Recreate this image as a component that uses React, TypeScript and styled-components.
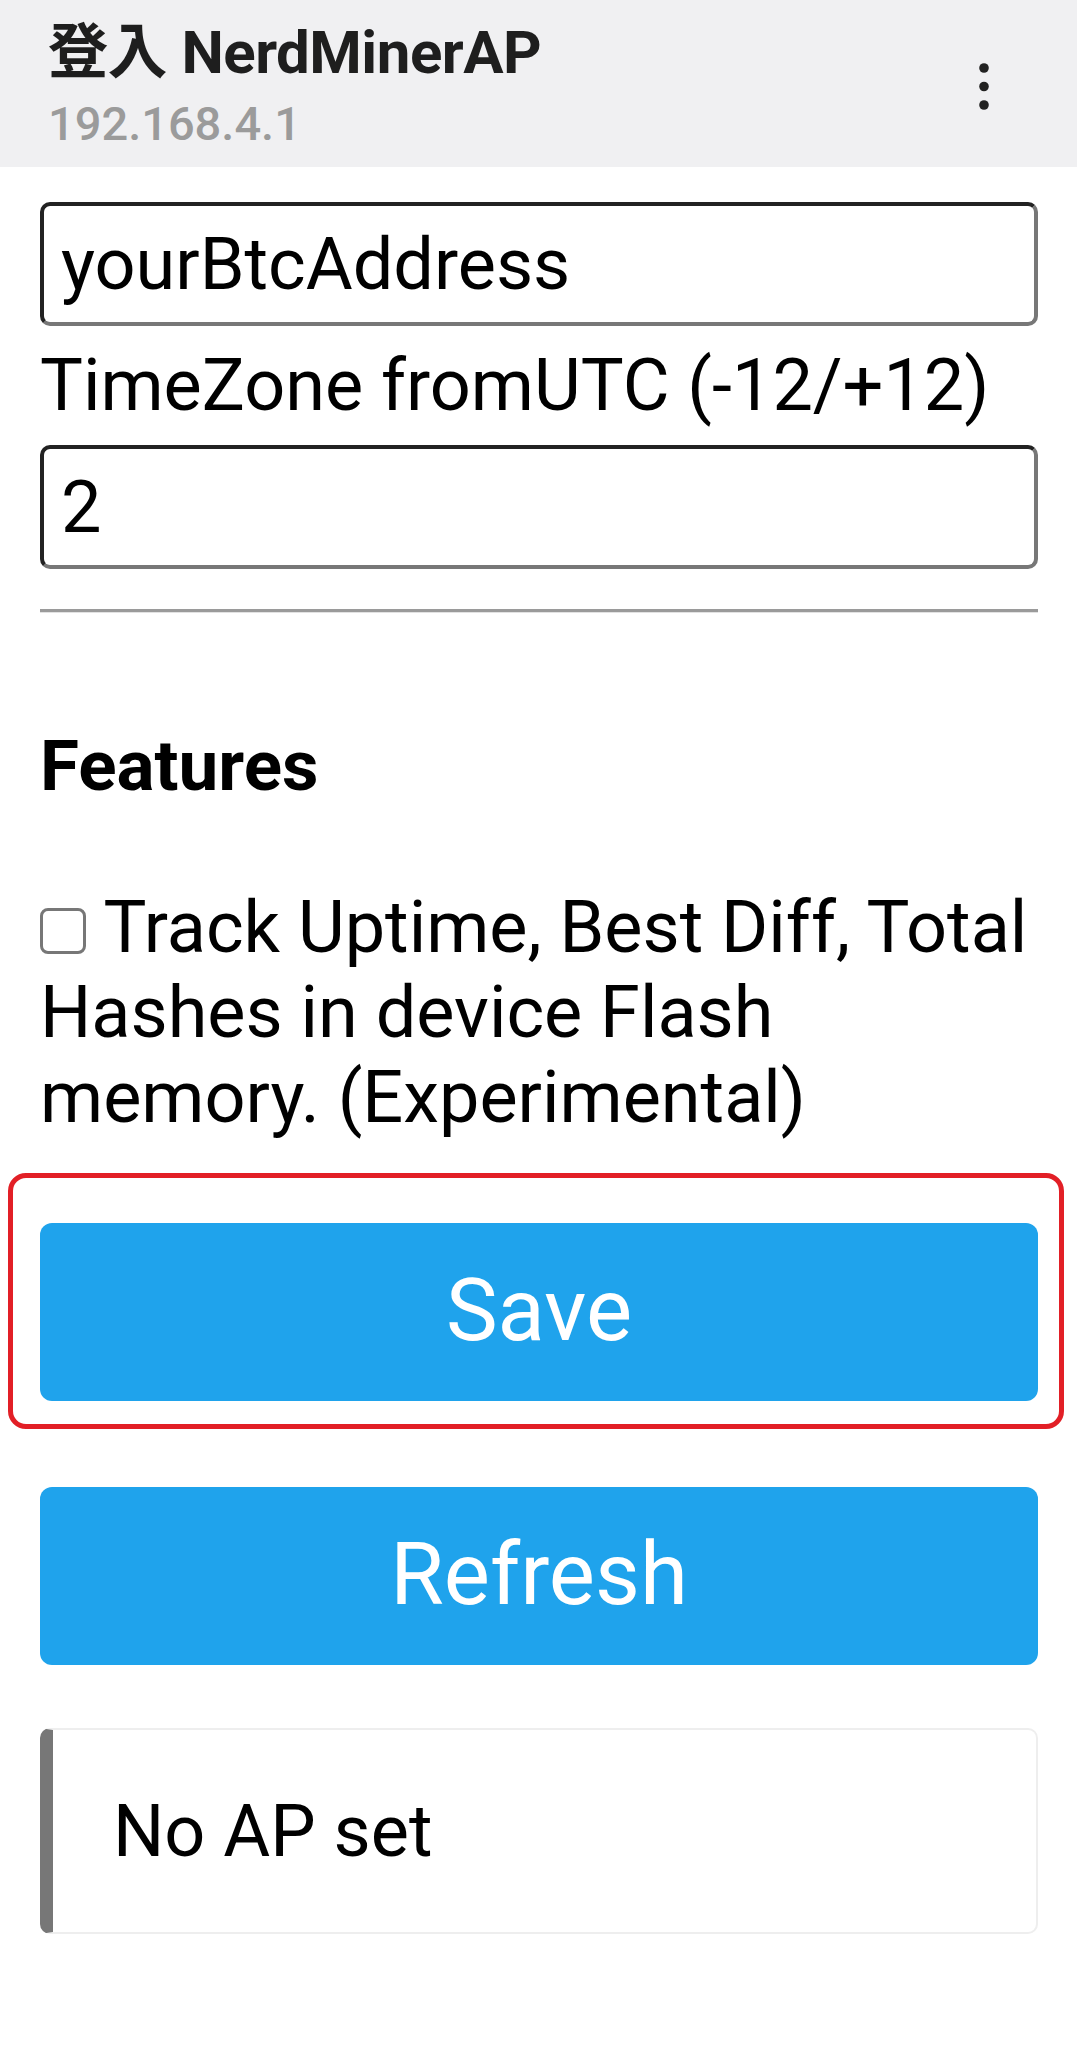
import React from "react";
import styled, { createGlobalStyle } from "styled-components";

const GlobalStyle = createGlobalStyle`
  html, body {
    margin: 0;
    padding: 0;
    background: #ffffff;
    font-family: Roboto, "Noto Sans CJK TC", "Noto Sans", sans-serif;
    color: #000;
  }
  * { box-sizing: border-box; }
`;

const Page = styled.div`
  width: 1077px;
  min-height: 2048px;
  background: #fff;
`;

const TopBar = styled.header`
  height: 167px;
  background: #f0f0f2;
  display: flex;
  align-items: center;
  justify-content: space-between;
  padding: 0 83px 0 48px;
`;

const TitleBlock = styled.div`
  display: flex;
  flex-direction: column;
  padding-top: 5px;
`;

const Title = styled.div`
  font-family: Roboto, "Noto Sans CJK TC", sans-serif;
  font-weight: 700;
  font-size: 60px;
  line-height: 70px;
  color: #1e1e1e;
  letter-spacing: -0.5px;
`;

const Subtitle = styled.div`
  font-family: Roboto, sans-serif;
  font-weight: 500;
  font-size: 47px;
  line-height: 60px;
  color: #9b9b9b;
  margin-top: 6px;
`;

const Kebab = styled.svg`
  width: 20px;
  height: 56px;
  display: block;
  margin-top: 6px;
`;

const Content = styled.main`
  padding: 0 39px 0 40px;
  display: flex;
  flex-direction: column;
`;

const TextInput = styled.input<{ $top: number }>`
  display: block;
  width: 100%;
  height: 124px;
  margin: ${(p) => p.$top}px 0 0 0;
  padding: 0 17px;
  border-style: solid;
  border-width: 4px;
  border-color: #222 #777 #777 #222;
  border-radius: 10px;
  font-family: Roboto, sans-serif;
  font-size: 72px;
  color: #000;
  background: #fff;
  outline: none;
`;

const FieldLabel = styled.label`
  display: block;
  font-size: 72px;
  line-height: 85px;
  margin: 17px 0;
`;

const Rule = styled.hr`
  margin: 40px 0 0 0;
  border: 0;
  border-top: 3px solid #9a9a9a;
  border-bottom: 1px solid #e2e2e2;
  height: 0;
`;

const SectionTitle = styled.h3`
  margin: 110px 0 0 0;
  font-size: 71px;
  line-height: 85px;
  font-weight: 700;
`;

const CheckRow = styled.label`
  display: block;
  margin-top: 77px;
  font-size: 72px;
  line-height: 85px;
`;

const CheckBox = styled.input`
  appearance: none;
  -webkit-appearance: none;
  width: 46px;
  height: 46px;
  margin: 0 1px 0 0;
  border: 3px solid #777;
  border-radius: 8px;
  background: #fff;
  vertical-align: -2px;
`;

const ButtonSlot = styled.div<{ $top: number }>`
  position: relative;
  margin-top: ${(p) => p.$top}px;
`;

const Highlight = styled.div`
  position: absolute;
  top: -50px;
  left: -32px;
  right: -26px;
  bottom: -28px;
  border: 5px solid #e21f26;
  border-radius: 18px;
  pointer-events: none;
`;

const ActionButton = styled.button`
  display: block;
  width: 100%;
  height: 178px;
  border: 0;
  border-radius: 12px;
  background: #1fa3ec;
  color: #fff;
  font-family: Roboto, sans-serif;
  font-size: 87px;
  padding: 0 0 4px 0;
  cursor: pointer;
`;

const Message = styled.div`
  margin-top: 63px;
  height: 206px;
  display: flex;
  align-items: center;
  padding-left: 60px;
  border: 2px solid #eee;
  border-left: 13px solid #777;
  border-radius: 10px;
  font-size: 72px;
`;

export default function App() {
  return (
    <Page>
      <GlobalStyle />
      <TopBar>
        <TitleBlock>
          <Title>登入 NerdMinerAP</Title>
          <Subtitle>192.168.4.1</Subtitle>
        </TitleBlock>
        <Kebab viewBox="0 0 20 56" aria-hidden="true">
          <circle cx="10" cy="9" r="4.8" fill="#222" />
          <circle cx="10" cy="27.5" r="4.8" fill="#222" />
          <circle cx="10" cy="46" r="4.8" fill="#222" />
        </Kebab>
      </TopBar>
      <Content>
        <TextInput $top={35} defaultValue="yourBtcAddress" />
        <FieldLabel>TimeZone fromUTC (-12/+12)</FieldLabel>
        <TextInput $top={0} defaultValue="2" />
        <Rule />
        <SectionTitle>Features</SectionTitle>
        <CheckRow>
          <CheckBox type="checkbox" /> Track Uptime, Best Diff, Total
          <br />
          Hashes in device Flash
          <br />
          memory. (Experimental)
        </CheckRow>
        <ButtonSlot $top={83}>
          <ActionButton>Save</ActionButton>
          <Highlight />
        </ButtonSlot>
        <ButtonSlot $top={86}>
          <ActionButton>Refresh</ActionButton>
        </ButtonSlot>
        <Message>No AP set</Message>
      </Content>
    </Page>
  );
}
